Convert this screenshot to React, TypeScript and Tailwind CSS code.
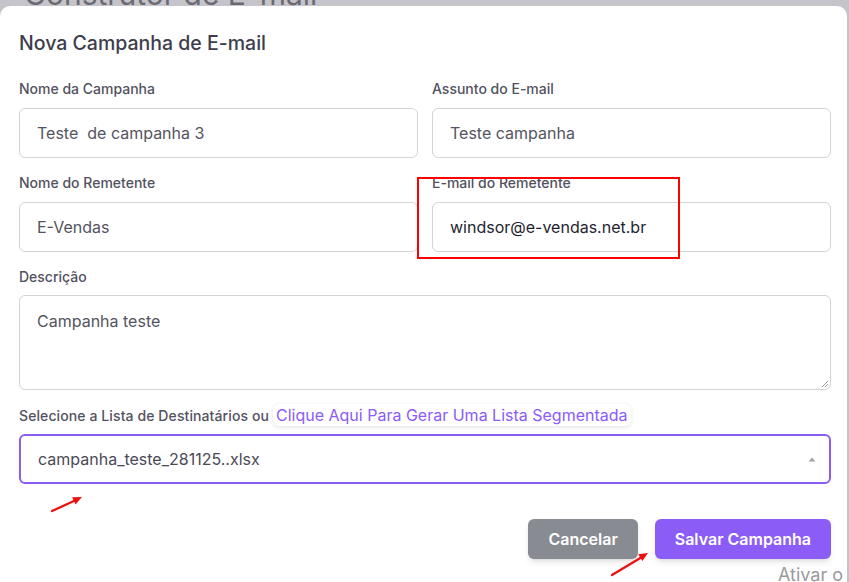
const font = { fontFamily: 'Inter, "Noto Sans", sans-serif' };

interface FieldProps {
  label: string;
  value: string;
  dark?: boolean;
}

function Field({ label, value, dark = false }: FieldProps) {
  return (
    <div className="flex flex-col">
      <label className="text-[14px] font-medium text-[#52525e] leading-4 h-4">{label}</label>
      <div className="mt-[11px] h-[50px] rounded-md border border-[#d4d4d8] bg-white px-[17px] flex items-center">
        <span className={`text-[16px] whitespace-pre ${dark ? 'text-[#1f2430]' : 'text-[#545460]'}`}>{value}</span>
      </div>
    </div>
  );
}

export default function App() {
  return (
    <div className="w-[849px] h-[582px] overflow-hidden bg-[#c6c4cb] relative" style={font}>
      {/* Backdrop page title, clipped */}
      <div className="h-[6px] overflow-hidden">
        <div className="-mt-[24px] ml-[24px] text-[30px] text-[#6b6a72] leading-[36px]">Construtor de E-mail</div>
      </div>

      {/* Modal */}
      <div className="bg-white rounded-t-[10px] w-[847px] h-[576px] px-[19px] pt-[25px]">
        <h2 className="text-[19.5px] font-medium text-[#3d3d4c] leading-6">Nova Campanha de E-mail</h2>

        <div className="mt-[26px] grid grid-cols-2 gap-x-[14px] gap-y-[17px] w-[812px]">
          <Field label="Nome da Campanha" value="Teste  de campanha 3" />
          <Field label="Assunto do E-mail" value="Teste campanha" />
          <Field label="Nome do Remetente" value="E-Vendas" />
          <Field label="E-mail do Remetente" value="windsor@e-vendas.net.br" dark />
        </div>

        <div className="mt-[17px] w-[812px]">
          <label className="text-[14px] font-medium text-[#52525e] leading-4 block h-4">Descrição</label>
          <div className="mt-[10px] h-[95px] rounded-md border border-[#d4d4d8] bg-white px-[17px] pt-[13px] relative">
            <span className="text-[16px] text-[#545460]">Campanha teste</span>
            <svg className="absolute right-[1px] bottom-[1px]" width="8" height="8" viewBox="0 0 8 8">
              <path d="M7 1 L1 7 M7 4 L4 7" stroke="#9a9a9a" strokeWidth="1" />
            </svg>
          </div>
        </div>

        <div className="mt-[13px] w-[812px]">
          <div className="flex items-center h-[24px]">
            <span className="text-[14px] font-medium text-[#52525e] tracking-[0.1px]">Selecione a Lista de Destinatários ou</span>
            <span className="ml-[4px] px-[3px] rounded-md bg-white shadow-[0_1px_4px_rgba(0,0,0,0.12)] text-[16px] text-[#8b5cf6] leading-[22px]">
              Clique Aqui Para Gerar Uma Lista Segmentada
            </span>
          </div>
          <div className="mt-[7px] h-[50px] rounded-md border-2 border-[#8b5cf6] bg-white pl-[17px] pr-[10px] flex items-center justify-between">
            <span className="text-[16px] text-[#4a4a56]">campanha_teste_281125..xlsx</span>
            <svg width="10" height="6" viewBox="0 0 10 6" className="mr-[2px]">
              <path d="M1.5 5.5 L5 1.5 L8.5 5.5 Z" fill="#a3a3a8" />
            </svg>
          </div>
        </div>

        <div className="mt-[35px] flex justify-end gap-[17px] w-[812px]">
          <button className="h-[40px] px-[20px] rounded-md bg-[#898b92] text-white text-[16px] font-semibold shadow-md">
            Cancelar
          </button>
          <button className="h-[40px] px-[20px] rounded-md bg-[#8b5cf6] text-white text-[16px] font-semibold shadow-md">
            Salvar Campanha
          </button>
        </div>
      </div>

      {/* Annotation overlay: red box and arrows */}
      <div className="absolute left-[417px] top-[177px] w-[263px] h-[82px] border-2 border-[#ff0000] pointer-events-none" />
      <svg className="absolute inset-0 pointer-events-none" width="849" height="582" viewBox="0 0 849 582">
        <line x1="52" y1="511" x2="76" y2="500" stroke="#ee1111" strokeWidth="2.4" strokeLinecap="round" />
        <path d="M82 497 L75.5 504.4 L72.1 497.2 Z" fill="#ee1111" />
        <line x1="612" y1="575" x2="642" y2="557" stroke="#ee1111" strokeWidth="2.4" strokeLinecap="round" />
        <path d="M648 553 L642.4 561.1 L638.2 554.3 Z" fill="#ee1111" />
      </svg>

      <div className="absolute left-[778px] top-[565px] text-[18px] text-[#9a9aa0] leading-5">Ativar o</div>
    </div>
  );
}
